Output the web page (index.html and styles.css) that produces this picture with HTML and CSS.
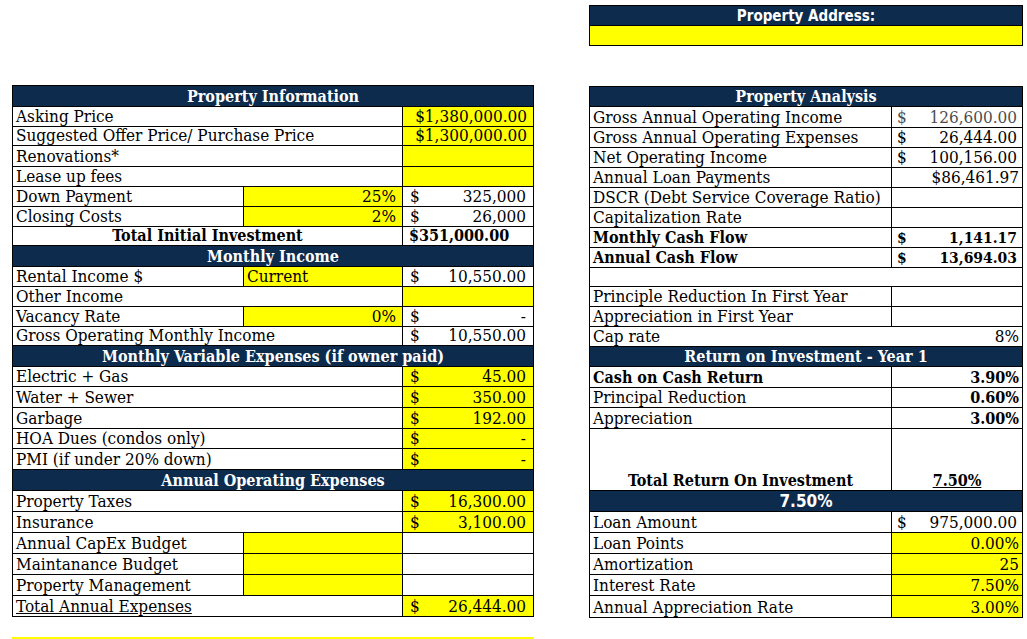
FILE: index.html
```html
<!DOCTYPE html>
<html>
<head>
<meta charset="utf-8">
<link rel="stylesheet" href="styles.css">
</head>
<body>
<div class="page">
  <div class="col-left">
    <div class="sheet sheet-left">
      <div class="hd s3">Property Information</div>
      <div class="lb s2">Asking Price</div><div class="y r">$1,380,000.00</div>
      <div class="lb s2">Suggested Offer Price/ Purchase Price</div><div class="y r">$1,300,000.00</div>
      <div class="lb s2">Renovations*</div><div class="y"></div>
      <div class="lb s2">Lease up fees</div><div class="y"></div>
      <div class="lb">Down Payment</div><div class="y r">25%</div><div class="acct"><span>$</span><span>325,000</span></div>
      <div class="lb">Closing Costs</div><div class="y r">2%</div><div class="acct"><span>$</span><span>26,000</span></div>
      <div class="lb s2 c b">Total Initial Investment</div><div class="lb b tot">$351,000.00</div>

      <div class="hd s3">Monthly Income</div>
      <div class="lb">Rental Income $</div><div class="y lb">Current</div><div class="acct"><span>$</span><span>10,550.00</span></div>
      <div class="lb s2">Other Income</div><div class="y"></div>
      <div class="lb">Vacancy Rate</div><div class="y r">0%</div><div class="acct"><span>$</span><span>-</span></div>
      <div class="lb s2">Gross Operating Monthly Income</div><div class="acct"><span>$</span><span>10,550.00</span></div>

      <div class="hd s3">Monthly Variable Expenses (if owner paid)</div>
      <div class="lb s2">Electric + Gas</div><div class="y acct"><span>$</span><span>45.00</span></div>
      <div class="lb s2">Water + Sewer</div><div class="y acct"><span>$</span><span>350.00</span></div>
      <div class="lb s2">Garbage</div><div class="y acct"><span>$</span><span>192.00</span></div>
      <div class="lb s2">HOA Dues (condos only)</div><div class="y acct"><span>$</span><span>-</span></div>
      <div class="lb s2">PMI (if under 20% down)</div><div class="y acct"><span>$</span><span>-</span></div>

      <div class="hd s3">Annual Operating Expenses</div>
      <div class="lb s2">Property Taxes</div><div class="y acct"><span>$</span><span>16,300.00</span></div>
      <div class="lb s2">Insurance</div><div class="y acct"><span>$</span><span>3,100.00</span></div>
      <div class="lb">Annual CapEx Budget</div><div class="y"></div><div class="w"></div>
      <div class="lb">Maintanance Budget</div><div class="y"></div><div class="w"></div>
      <div class="lb">Property Management</div><div class="y"></div><div class="w"></div>
      <div class="lb s2"><u>Total Annual Expenses</u></div><div class="y acct"><span>$</span><span>26,444.00</span></div>
    </div>
    <div class="strip"></div>
  </div>

  <div class="col-right">
    <div class="address">
      <div class="addr-hd">Property Address:</div>
      <div class="addr-in"></div>
    </div>
    <div class="sheet sheet-right">
      <div class="hd s2">Property Analysis</div>
      <div class="lb">Gross Annual Operating Income</div><div class="acct grey"><span>$</span><span>126,600.00</span></div>
      <div class="lb">Gross Annual Operating Expenses</div><div class="acct"><span>$</span><span>26,444.00</span></div>
      <div class="lb">Net Operating Income</div><div class="acct"><span>$</span><span>100,156.00</span></div>
      <div class="lb">Annual Loan Payments</div><div class="w r">$86,461.97</div>
      <div class="lb">DSCR (Debt Service Coverage Ratio)</div><div class="w"></div>
      <div class="lb">Capitalization Rate</div><div class="w"></div>
      <div class="lb b">Monthly Cash Flow</div><div class="acct b num-b"><span>$</span><span>1,141.17</span></div>
      <div class="lb b">Annual Cash Flow</div><div class="acct b num-b"><span>$</span><span>13,694.03</span></div>
      <div class="w s2"></div>
      <div class="lb">Principle Reduction In First Year</div><div class="w"></div>
      <div class="lb">Appreciation in First Year</div><div class="w"></div>
      <div class="lb s2 split"><span>Cap rate</span><span class="pct">8%</span></div>

      <div class="hd s2">Return on Investment - Year 1</div>
      <div class="lb b">Cash on Cash Return</div><div class="w r b">3.90%</div>
      <div class="lb">Principal Reduction</div><div class="w r b">0.60%</div>
      <div class="lb">Appreciation</div><div class="w r b">3.00%</div>
      <div class="lb c b">Total Return On Investment</div><div class="w c b"><u>7.50%</u></div>

      <div class="hd hd-sans s2">7.50%</div>
      <div class="lb">Loan Amount</div><div class="acct"><span>$</span><span>975,000.00</span></div>
      <div class="lb">Loan Points</div><div class="y r">0.00%</div>
      <div class="lb">Amortization</div><div class="y r">25</div>
      <div class="lb">Interest Rate</div><div class="y r">7.50%</div>
      <div class="lb">Annual Appreciation Rate</div><div class="y r">3.00%</div>
    </div>
  </div>
</div>
</body>
</html>
```

FILE: styles.css
```css
* { box-sizing: border-box; }

body {
  margin: 0;
  background: #ffffff;
  font-family: "DejaVu Serif Condensed", "DejaVu Serif", serif;
  font-stretch: condensed;
  font-size: 17px;
  color: #000;
}

.page {
  display: flex;
  align-items: flex-start;
  gap: 55px;
  padding-left: 12px;
}

.col-left {
  display: flex;
  flex-direction: column;
  padding-top: 85px;
  width: 522px;
}

.col-right {
  display: flex;
  flex-direction: column;
  padding-top: 5px;
  width: 434px;
}

.sheet {
  display: grid;
  gap: 1px;
  padding: 1px;
  background: #000;
}

.sheet-left {
  grid-template-columns: 230px 158px 130px;
  grid-template-rows: 20px 19px 18px 20px 19px 19px 19px 18px 20px 19px 19px 19px 18px 20px 19px 20px 20px 19px 20px 20px 20px 20px 20px 20px 20px 20px;
}

.sheet-right {
  grid-template-columns: 301px 130px;
  grid-template-rows: 19px 20px 19px 19px 19px 19px 19px 19px 19px 18px 19px 19px 19px 19px 20px 19px 20px 61px 20px 20px 20px 20px 20px 21px;
}

.sheet > div {
  background: #fff;
  display: flex;
  align-items: flex-end;
  line-height: 19px;
  white-space: nowrap;
  overflow: visible;
  min-width: 0;
}

.s2 { grid-column: span 2; }
.s3 { grid-column: span 3; }

.sheet > .hd {
  background: #0d2b4c;
  color: #fff;
  font-weight: bold;
  font-size: 16px;
  justify-content: center;
  align-items: center;
}

.sheet > .hd-sans {
  font-family: "DejaVu Sans Condensed", "DejaVu Sans", sans-serif;
  font-size: 17px;
}

.lb { padding-left: 3px; }
.sheet > .b { font-weight: bold; font-size: 16px; }
.sheet > .num-b { font-size: 15.5px; }
.sheet > .c { justify-content: center; padding-left: 0; }
.sheet > .r { justify-content: flex-end; padding-right: 3px; }
.sheet-left > .r { padding-right: 6px; }
.sheet-left > .tot { padding-left: 6px; }

.sheet > .y { background: #ffff00; }
.sheet > .w { background: #fff; }

.sheet > .acct {
  justify-content: space-between;
  padding: 0 7px;
}
.sheet-right > .acct { padding: 0 5px; }
.grey { color: #4d4d4d; }

.sheet > .split {
  justify-content: space-between;
  padding-right: 3px;
}

.strip {
  margin-top: 20px;
  height: 4px;
  background: #ffff00;
}

.address {
  border: 1px solid #000;
  display: flex;
  flex-direction: column;
}

.addr-hd {
  height: 20px;
  background: #0d2b4c;
  color: #fff;
  font-family: "DejaVu Sans Condensed", "DejaVu Sans", sans-serif;
  font-weight: bold;
  font-size: 15px;
  display: flex;
  align-items: center;
  justify-content: center;
  border-bottom: 1px solid #000;
}

.addr-in {
  height: 19px;
  background: #ffff00;
}

.address + .sheet { margin-top: 40px; }
```
